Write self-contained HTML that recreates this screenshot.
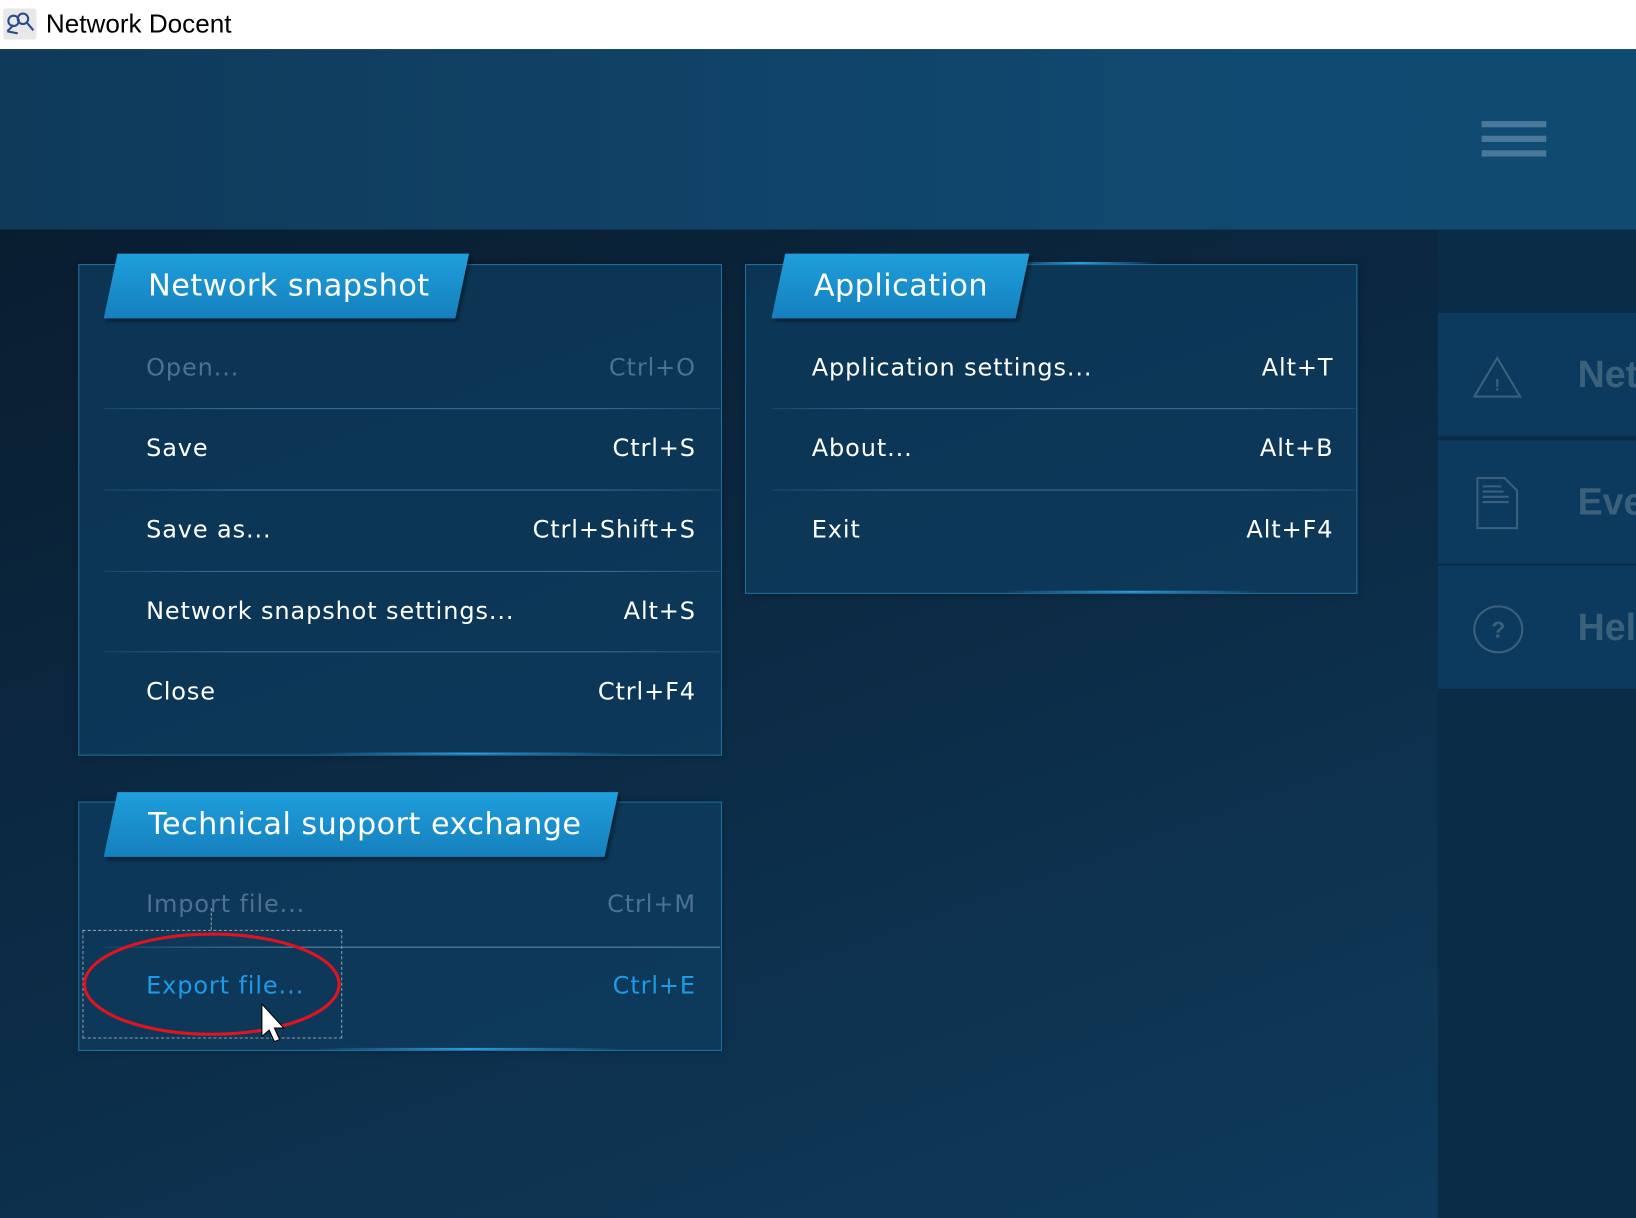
<!DOCTYPE html>
<html><head><meta charset="utf-8"><style>
html,body{margin:0;padding:0;width:1636px;height:1218px;overflow:hidden;background:#0b2438}
#w{position:absolute;left:0;top:0;width:1568px;height:1167px;overflow:hidden;transform:scale(1.04337,1.04370);transform-origin:0 0;font-family:"DejaVu Sans","Liberation Sans",sans-serif}
.title{position:absolute;left:0;top:0;width:1568px;height:47px;background:#fff;border-bottom:1px solid #ddd}
.title span{position:absolute;left:44px;top:9px;font:25px "Liberation Sans",sans-serif;color:#000}
.hdr{position:absolute;left:0;top:47px;width:1568px;height:173px;background:linear-gradient(90deg,#0f3a5a,#104a72 80%,#0f4a70)}
.ham{position:absolute;left:1420px;width:62px;height:6px;background:#4a7898}
.body{position:absolute;left:0;top:220px;width:1568px;height:947px;background:linear-gradient(160deg,#091d30 0%,#0c2c47 50%,#0f3c5e 100%)}
.side{position:absolute;left:1378px;top:220px;width:190px;height:947px;background:#0b2c46}
.si{position:absolute;left:1378px;width:190px;height:118px;background:#0c3a5e;overflow:hidden}
.si b{position:absolute;left:134px;top:38px;font:bold 36px "Liberation Sans",sans-serif;color:#3a607c;white-space:nowrap}
.panel{position:absolute;border:1px solid #1f6f9f;background:rgba(14,60,95,.75);box-shadow:0 0 6px rgba(0,0,0,.3)}
.tab{position:absolute;height:62px;background:linear-gradient(#1e9fdc,#1580bd);transform:skewX(-12deg);box-shadow:3px 3px 3px rgba(0,0,0,.4)}
.tt{position:absolute;color:#fff;font-size:29px;letter-spacing:0.45px;white-space:nowrap}
.row{position:absolute;font-size:23px;letter-spacing:0.85px;color:#fff;white-space:nowrap}
.sc{position:absolute;font-size:23px;letter-spacing:0.85px;color:#fff;text-align:right;white-space:nowrap}
.dis{color:#4d7190}
.sep{position:absolute;height:1px;background:linear-gradient(90deg,rgba(60,110,145,.3),#3c6e91 20%,#3c6e91 80%,rgba(60,110,145,.4))}
.glow{position:absolute;height:2px;background:linear-gradient(90deg,transparent,#2a9ee0,transparent)}
</style></head><body><div id="w">
<div class="title">
<svg style="position:absolute;left:3px;top:8px" width="32" height="30" viewBox="0 0 32 30"><rect x="0" y="0" width="32" height="30" rx="3" fill="#e8e8e8"/><g fill="none" stroke="#2b4a8a" stroke-width="2"><circle cx="10" cy="12" r="5"/><circle cx="19" cy="10" r="5"/><path d="M23 14l6 7M4 22l6-6M4 22l10 2"/></g></svg>
<span>Network Docent</span></div>
<div class="hdr"></div>
<div class="ham" style="top:116px"></div><div class="ham" style="top:130px"></div><div class="ham" style="top:144px"></div>
<div class="body"></div>
<div class="side"></div>
<div class="si" style="top:300px"><svg style="position:absolute;left:32px;top:40px" width="50" height="42" viewBox="0 0 50 42"><path d="M25 3L47 40H3Z" fill="none" stroke="#3a607c" stroke-width="2"/><text x="25" y="34" text-anchor="middle" font-size="16" font-weight="bold" fill="#3a607c" font-family="Liberation Sans">!</text></svg><b>Network</b></div>
<div class="si" style="top:422px"><svg style="position:absolute;left:36px;top:34px" width="42" height="52" viewBox="0 0 42 52"><path d="M2 2H28L40 14V50H2Z" fill="none" stroke="#3a607c" stroke-width="2"/><path d="M7 10H25M7 15H27M7 20H32M7 25H32" stroke="#3a607c" stroke-width="2"/></svg><b>Events</b></div>
<div class="si" style="top:542px"><svg style="position:absolute;left:32px;top:36px" width="52" height="50" viewBox="0 0 52 50"><ellipse cx="26" cy="25" rx="23" ry="22" fill="none" stroke="#3a607c" stroke-width="2"/><text x="26" y="33" text-anchor="middle" font-size="22" font-weight="bold" fill="#3a607c" font-family="Liberation Sans">?</text></svg><b>Help</b></div>

<!-- Panel 1 -->
<div class="panel" style="left:75px;top:253px;width:615px;height:469px"></div>
<div class="glow" style="left:300px;top:721px;width:300px"></div>
<div class="tab" style="left:106px;top:243px;width:337px"></div>
<div class="tt" style="left:142px;top:256px">Network snapshot</div>
<div class="row dis" style="left:140px;top:340px">Open...</div><div class="sc dis" style="right:901px;top:340px">Ctrl+O</div>
<div class="sep" style="left:100px;top:391px;width:590px"></div>
<div class="row" style="left:140px;top:417px">Save</div><div class="sc" style="right:901px;top:417px">Ctrl+S</div>
<div class="sep" style="left:100px;top:469px;width:590px"></div>
<div class="row" style="left:140px;top:495px">Save as...</div><div class="sc" style="right:901px;top:495px">Ctrl+Shift+S</div>
<div class="sep" style="left:100px;top:547px;width:590px"></div>
<div class="row" style="left:140px;top:573px">Network snapshot settings...</div><div class="sc" style="right:901px;top:573px">Alt+S</div>
<div class="sep" style="left:100px;top:624px;width:590px"></div>
<div class="row" style="left:140px;top:650px">Close</div><div class="sc" style="right:901px;top:650px">Ctrl+F4</div>

<!-- Panel 2 -->
<div class="panel" style="left:714px;top:253px;width:585px;height:314px"></div>
<div class="glow" style="left:960px;top:566px;width:250px"></div>
<div class="glow" style="left:960px;top:251px;width:150px"></div>
<div class="tab" style="left:746px;top:243px;width:234px"></div>
<div class="tt" style="left:780px;top:256px">Application</div>
<div class="row" style="left:778px;top:340px">Application settings...</div><div class="sc" style="right:290px;top:340px">Alt+T</div>
<div class="sep" style="left:740px;top:391px;width:559px"></div>
<div class="row" style="left:778px;top:417px">About...</div><div class="sc" style="right:290px;top:417px">Alt+B</div>
<div class="sep" style="left:740px;top:469px;width:559px"></div>
<div class="row" style="left:778px;top:495px">Exit</div><div class="sc" style="right:290px;top:495px">Alt+F4</div>

<!-- Panel 3 -->
<div class="panel" style="left:75px;top:768px;width:615px;height:237px"></div>
<div class="glow" style="left:300px;top:1004px;width:300px"></div>
<div class="tab" style="left:106px;top:759px;width:480px"></div>
<div class="tt" style="left:142px;top:772px">Technical support exchange</div>
<div class="row dis" style="left:140px;top:854px">Import file...</div><div class="sc dis" style="right:901px;top:854px">Ctrl+M</div>
<div class="sep" style="left:100px;top:907px;width:590px;background:linear-gradient(90deg,rgba(90,140,170,.2),#5a8cae 30%,#5a8cae 90%)"></div>
<div class="row" style="left:140px;top:932px;color:#1e9be6">Export file...</div><div class="sc" style="right:901px;top:932px;color:#1e9be6">Ctrl+E</div>
<div style="position:absolute;left:79px;top:891px;width:247px;height:102px;border:1px dashed #8a9aa8"></div>
<div style="position:absolute;left:202px;top:870px;width:0;height:21px;border-left:1px dashed #8a9aa8"></div>
<svg style="position:absolute;left:0;top:0" width="1568" height="1167"><ellipse cx="203" cy="943" rx="122" ry="48" fill="none" stroke="#e0141e" stroke-width="3"/><path d="M251 962V993L258 987L263 998L268 996L263 985L272 985Z" fill="#fff" stroke="#000" stroke-width="1"/></svg>
</div></body></html>
